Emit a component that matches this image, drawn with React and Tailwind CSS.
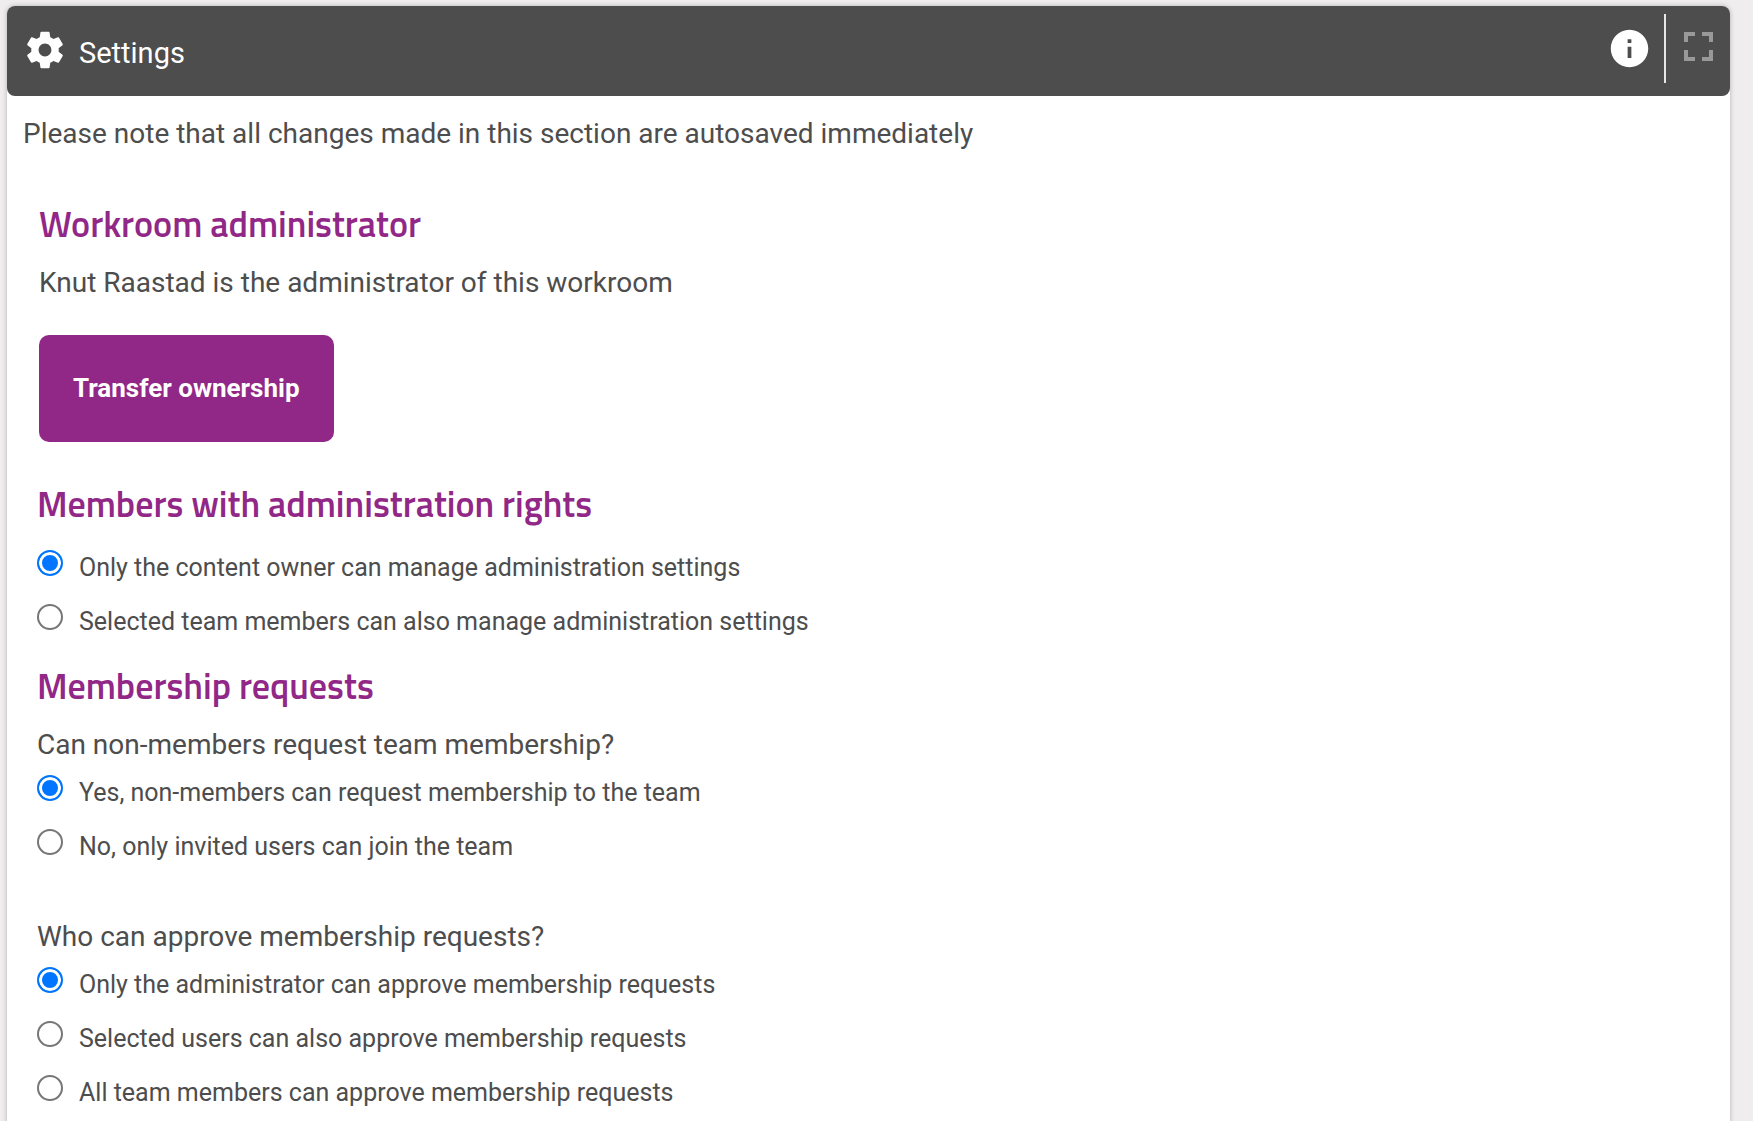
import { MdInfo } from "react-icons/md";

function GearIcon({ className }) {
  return (
    <svg viewBox="0 0 24 24" fill="currentColor" className={className} aria-hidden="true">
      <path d="M19.43 12.98c.04-.32.07-.64.07-.98s-.03-.66-.07-.98l2.11-1.65c.19-.15.24-.42.12-.64l-2-3.46c-.12-.22-.39-.3-.61-.22l-2.49 1c-.52-.4-1.08-.73-1.69-.98l-.38-2.65C14.46 2.18 14.25 2 14 2h-4c-.25 0-.46.18-.49.42l-.38 2.65c-.61.25-1.17.59-1.69.98l-2.49-1c-.23-.09-.49 0-.61.22l-2 3.46c-.13.22-.07.49.12.64l2.11 1.65c-.04.32-.07.65-.07.98s.03.66.07.98l-2.11 1.65c-.19.15-.24.42-.12.64l2 3.46c.12.22.39.3.61.22l2.49-1c.52.4 1.08.73 1.69.98l.38 2.65c.03.24.24.42.49.42h4c.25 0 .46-.18.49-.42l.38-2.65c.61-.25 1.17-.59 1.69-.98l2.49 1c.23.09.49 0 .61-.22l2-3.46c.12-.22.07-.49-.12-.64l-2.11-1.65zM12 15.5c-1.93 0-3.5-1.57-3.5-3.5s1.57-3.5 3.5-3.5 3.5 1.57 3.5 3.5-1.57 3.5-3.5 3.5z" />
    </svg>
  );
}

function FullscreenIcon({ className }) {
  return (
    <svg viewBox="0 0 29 29" fill="none" stroke="currentColor" strokeWidth="4" className={className} aria-hidden="true">
      <path d="M2 10V2h9M18 2h9v8M27 18v9h-9M11 27H2v-9" />
    </svg>
  );
}

function Heading({ children }) {
  return (
    <h2 className="font-['Titillium_Web','Roboto',sans-serif] text-4xl leading-11 font-semibold text-[#912786]">
      {children}
    </h2>
  );
}

function RadioList({ name, label, options }) {
  return (
    <div role="radiogroup" aria-label={label}>
      {options.map((option, i) => (
        <label key={option} className="flex items-start gap-4 pb-[18px] text-[25px] leading-9">
          <input
            type="radio"
            name={name}
            defaultChecked={i === 0}
            className="m-0 size-[26px] shrink-0 appearance-none rounded-full border-2 border-[#767676] bg-white checked:border-[#0075ff] checked:bg-[#0075ff] checked:shadow-[inset_0_0_0_3px_white]"
          />
          <span>{option}</span>
        </label>
      ))}
    </div>
  );
}

export default function App() {
  return (
    <div className="h-screen overflow-hidden bg-[#efedee] pt-1.5 pr-[23px] pl-[7px] font-['Roboto',sans-serif] text-[28px] leading-9 text-[#4d4d4d]">
      <main className="min-h-full rounded-lg bg-white shadow-[0_0_5px_rgba(0,0,0,0.25)]">
        <header className="flex items-start rounded-lg bg-[#4d4d4d] pt-2 pr-[17px] pb-[13px] pl-4 text-white">
          <GearIcon className="mt-3.5 size-11 shrink-0" />
          <h1 className="mt-5 ml-3 text-[29px] leading-[38px]">Settings</h1>
          <button type="button" aria-label="Information" className="mt-3 ml-auto">
            <MdInfo className="size-[45px]" />
          </button>
          <div className="ml-3 flex h-[69px] items-start border-l-2 border-[#e6e6e6] pt-[18px] pl-[18px]">
            <button type="button" aria-label="Full screen" className="text-[#999]">
              <FullscreenIcon className="size-[29px]" />
            </button>
          </div>
        </header>

        <p className="mt-5 pl-4">Please note that all changes made in this section are autosaved immediately</p>

        <section className="mt-[50px] pl-8">
          <Heading>Workroom administrator</Heading>
          <p className="mt-[19px]">Knut Raastad is the administrator of this workroom</p>
          <button
            type="button"
            className="mt-[34px] rounded-[10px] bg-[#912786] px-[34px] py-[35px] text-[26px] leading-[37px] font-bold text-white"
          >
            Transfer ownership
          </button>
        </section>

        <section className="mt-10 pl-[30px]">
          <Heading>Members with administration rights</Heading>
          <div className="mt-6">
            <RadioList
              name="rights"
              label="Members with administration rights"
              options={[
                "Only the content owner can manage administration settings",
                "Selected team members can also manage administration settings",
              ]}
            />
          </div>
        </section>

        <section className="mt-1.5 pl-[30px]">
          <Heading>Membership requests</Heading>
          <p className="mt-[19px] mb-3">Can non-members request team membership?</p>
          <RadioList
            name="request"
            label="Can non-members request team membership?"
            options={["Yes, non-members can request membership to the team", "No, only invited users can join the team"]}
          />
          <p className="mt-9 mb-3">Who can approve membership requests?</p>
          <RadioList
            name="approve"
            label="Who can approve membership requests?"
            options={[
              "Only the administrator can approve membership requests",
              "Selected users can also approve membership requests",
              "All team members can approve membership requests",
            ]}
          />
        </section>
      </main>
    </div>
  );
}
